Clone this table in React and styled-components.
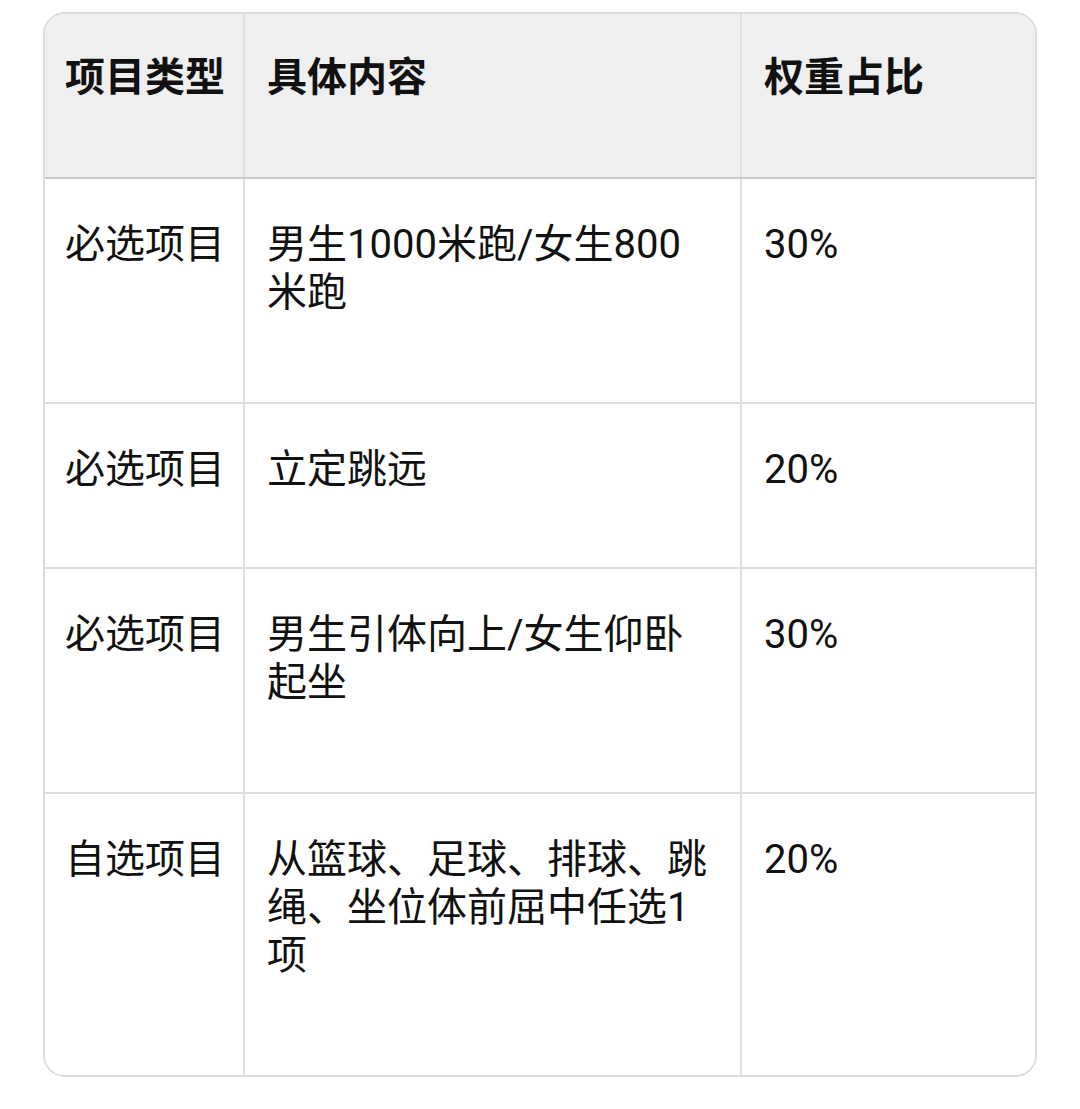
import React from "react";
import styled, { createGlobalStyle } from "styled-components";

const GlobalStyle = createGlobalStyle`
  body {
    margin: 0;
    background: #fff;
    font-family: Roboto, "Noto Sans CJK SC", sans-serif;
    color: #111;
  }
`;

const rows = [
  { type: "必选项目", content: "男生1000米跑/女生800米跑", weight: "30%", h: 225 },
  { type: "必选项目", content: "立定跳远", weight: "20%", h: 165 },
  { type: "必选项目", content: "男生引体向上/女生仰卧起坐", weight: "30%", h: 225 },
  {
    type: "自选项目",
    content: "从篮球、足球、排球、跳绳、坐位体前屈中任选1项",
    weight: "20%",
    h: 283,
  },
];

function App() {
  return (
    <Page>
      <GlobalStyle />
      <Table>
        <Row $h={165} $head>
          <Cell $head>项目类型</Cell>
          <Cell $head>具体内容</Cell>
          <Cell $head>权重占比</Cell>
        </Row>
        {rows.map((r, i) => (
          <Row key={i} $h={r.h}>
            <Cell>{r.type}</Cell>
            <Cell>{r.content}</Cell>
            <Cell>{r.weight}</Cell>
          </Row>
        ))}
      </Table>
    </Page>
  );
}

const Page = styled.div`
  padding: 12px 43px 0 43px;
`;

const Table = styled.div`
  width: 994px;
  border: 2px solid #dcdcdc;
  border-radius: 22px;
  overflow: hidden;
  box-sizing: border-box;
`;

const Row = styled.div`
  display: grid;
  grid-template-columns: 200px 497px 1fr;
  height: ${(p) => p.$h - 2}px;
  background: ${(p) => (p.$head ? "#efefef" : "#fff")};
  border-bottom: 2px solid ${(p) => (p.$head ? "#cbcbcb" : "#dedede")};

  &:last-child {
    border-bottom: none;
  }
`;

const Cell = styled.div`
  padding: ${(p) => (p.$head ? "40px" : "42px")} 6px 0 20px;
  font-size: 40px;
  line-height: 48px;
  font-weight: ${(p) => (p.$head ? 700 : 400)};
  border-right: 2px solid #e0e0e0;

  &:nth-child(2) {
    padding-left: 22px;
    padding-right: 27px;
  }

  &:last-child {
    padding-left: 22px;
    border-right: none;
  }
`;

export default App;
